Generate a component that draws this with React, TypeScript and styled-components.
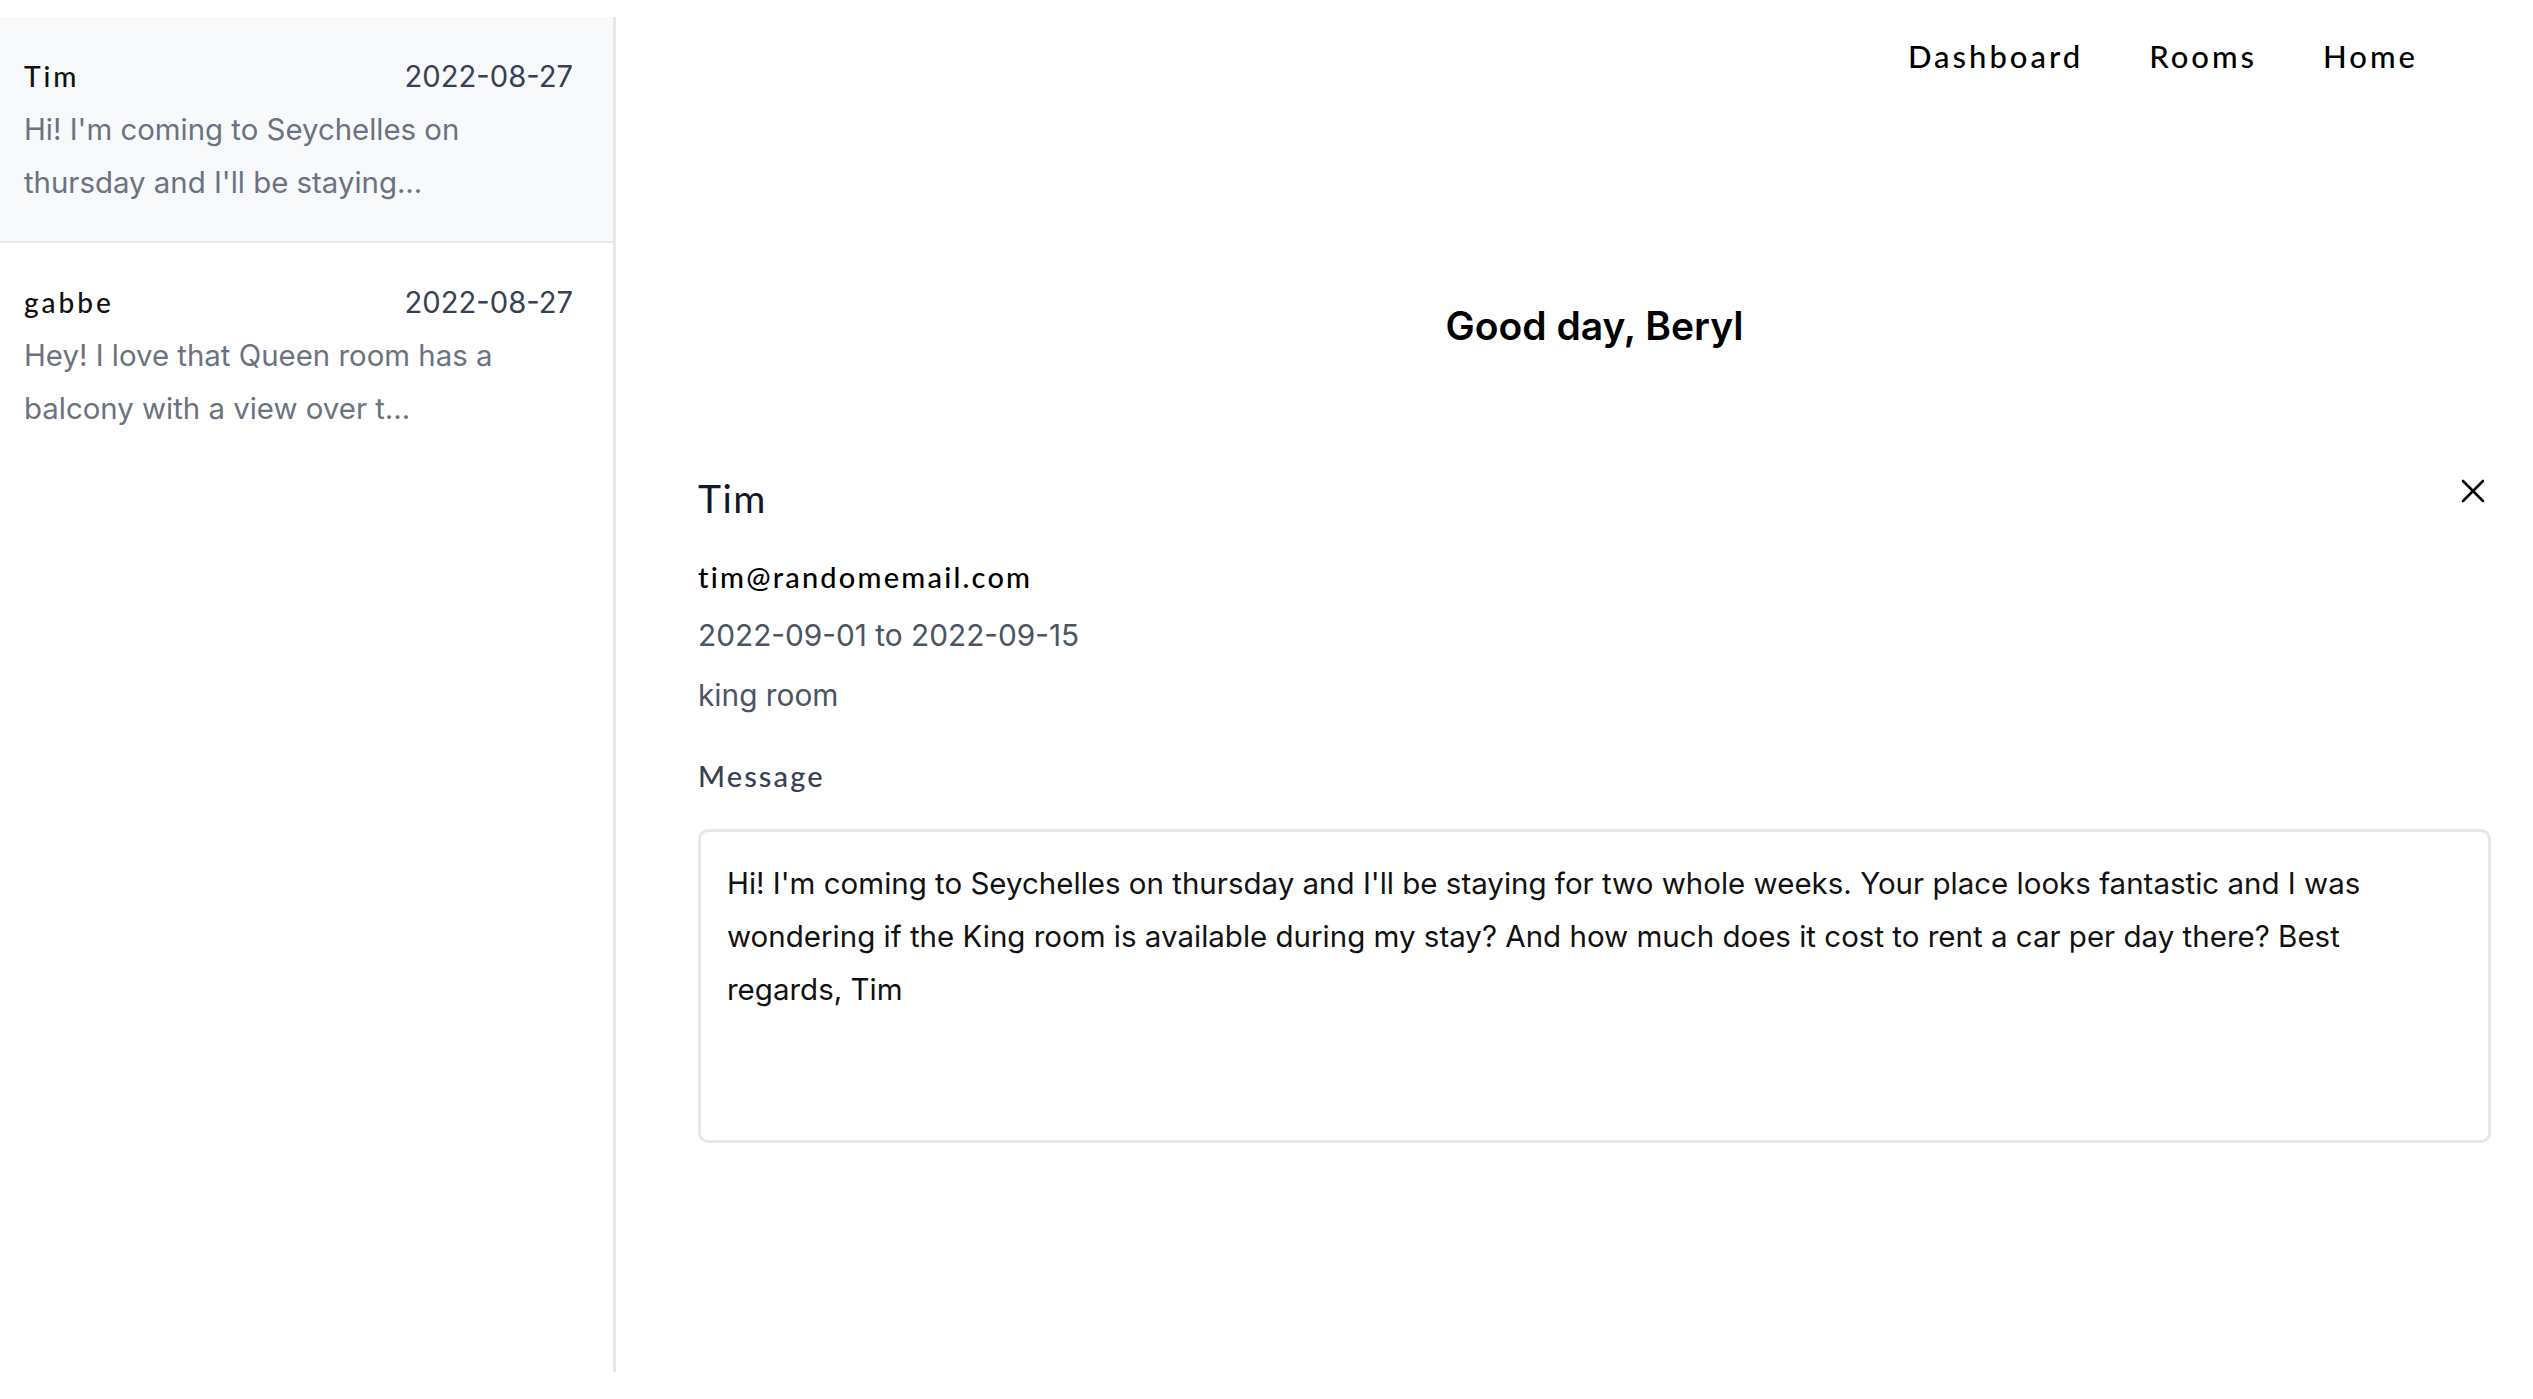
import React from "react";
import styled, { createGlobalStyle } from "styled-components";

const GlobalStyle = createGlobalStyle`
  html, body { margin: 0; padding: 0; background: #ffffff; }
  body { font-family: Inter, "Noto Sans", sans-serif; color: #111827; }
  * { box-sizing: border-box; }
`;

const display = `Lato, "Noto Sans", sans-serif`;

const Page = styled.div`
  display: flex;
  min-height: 100vh;
`;

const Sidebar = styled.aside`
  width: 616px;
  flex-shrink: 0;
  margin-top: 17px;
  height: 1355px;
  border-right: 3px solid #e8e8ea;
  display: flex;
  flex-direction: column;
`;

const Conversation = styled.div<{ $selected?: boolean }>`
  padding: 36px 40px 32px 24px;
  background: ${(p) => (p.$selected ? "#f8f9fa" : "#ffffff")};
  border-bottom: ${(p) => (p.$selected ? "2px solid #e7e8ea" : "none")};
  cursor: pointer;
`;

const ConversationHead = styled.div`
  display: flex;
  justify-content: space-between;
  align-items: center;
  height: 46px;
`;

const Name = styled.span`
  font-family: ${display};
  font-size: 28px;
  font-weight: 500;
  letter-spacing: 3px;
  color: #111111;
`;

const DateText = styled.span`
  font-size: 29.2px;
  color: #374151;
`;

const Preview = styled.p`
  margin: 4px 0 0;
  font-size: 29.4px;
  line-height: 53px;
  color: #6b7280;
`;

const Main = styled.main`
  flex: 1;
  display: flex;
  flex-direction: column;
`;

const Nav = styled.nav`
  height: 112px;
  display: flex;
  justify-content: flex-end;
  align-items: center;
  gap: 66px;
  padding-right: 115px;
`;

const NavLink = styled.a`
  font-family: ${display};
  font-size: 31px;
  font-weight: 500;
  letter-spacing: 3px;
  color: #000000;
  text-decoration: none;
  cursor: pointer;
`;

const Content = styled.div`
  padding: 0 42px 0 82px;
  display: flex;
  flex-direction: column;
`;

const Greeting = styled.h1`
  margin: 190px 0 0;
  text-align: center;
  font-size: 39px;
  line-height: 48px;
  font-weight: 600;
  color: #000000;
`;

const DetailHeader = styled.div`
  margin-top: 124px;
  display: flex;
  justify-content: space-between;
  align-items: center;
  height: 48px;
`;

const DetailTitle = styled.h2`
  margin: 0;
  font-family: ${display};
  font-size: 39px;
  font-weight: 400;
  letter-spacing: 1.5px;
  color: #111827;
`;

const CloseButton = styled.button`
  border: none;
  background: transparent;
  padding: 0;
  margin-right: 5px;
  margin-top: -14px;
  width: 26px;
  height: 26px;
  display: flex;
  align-items: center;
  justify-content: center;
  cursor: pointer;
`;

const Email = styled.div`
  margin-top: 35px;
  font-family: ${display};
  font-size: 29px;
  font-weight: 500;
  letter-spacing: 2.2px;
  line-height: 40px;
  color: #000000;
`;

const InfoLine = styled.div<{ $gap: number }>`
  margin-top: ${(p) => p.$gap}px;
  font-size: 29.8px;
  line-height: 44px;
  color: #4b5563;
`;

const Label = styled.div`
  margin-top: 39px;
  font-family: ${display};
  font-size: 29px;
  font-weight: 500;
  letter-spacing: 2.1px;
  line-height: 40px;
  color: #374151;
`;

const MessageBox = styled.div`
  margin-top: 33px;
  height: 314px;
  border: 3px solid #e5e7eb;
  border-radius: 10px;
  padding: 25px 70px 25px 26px;
  font-size: 29.5px;
  line-height: 53px;
  color: #111111;
`;

const CloseIcon = () => (
  <svg width="24" height="24" viewBox="0 0 24 24" fill="none" stroke="#000" strokeWidth="2.6" strokeLinecap="round">
    <path d="M2 2 L22 22 M22 2 L2 22" />
  </svg>
);

export default function App() {
  return (
    <>
      <GlobalStyle />
      <Page>
        <Sidebar>
          <Conversation $selected>
            <ConversationHead>
              <Name>Tim</Name>
              <DateText>2022-08-27</DateText>
            </ConversationHead>
            <Preview>Hi! I'm coming to Seychelles on thursday and I'll be staying...</Preview>
          </Conversation>
          <Conversation>
            <ConversationHead>
              <Name>gabbe</Name>
              <DateText>2022-08-27</DateText>
            </ConversationHead>
            <Preview>Hey! I love that Queen room has a balcony with a view over t...</Preview>
          </Conversation>
        </Sidebar>
        <Main>
          <Nav>
            <NavLink>Dashboard</NavLink>
            <NavLink>Rooms</NavLink>
            <NavLink>Home</NavLink>
          </Nav>
          <Content>
            <Greeting>Good day, Beryl</Greeting>
            <DetailHeader>
              <DetailTitle>Tim</DetailTitle>
              <CloseButton aria-label="Close">
                <CloseIcon />
              </CloseButton>
            </DetailHeader>
            <Email>tim@randomemail.com</Email>
            <InfoLine $gap={16}>2022-09-01 to 2022-09-15</InfoLine>
            <InfoLine $gap={16}>king room</InfoLine>
            <Label>Message</Label>
            <MessageBox>
              Hi! I'm coming to Seychelles on thursday and I'll be staying for two whole weeks. Your place looks fantastic and I was wondering if the King room is available during my stay? And how much does it cost to rent a car per day there? Best regards, Tim
            </MessageBox>
          </Content>
        </Main>
      </Page>
    </>
  );
}
